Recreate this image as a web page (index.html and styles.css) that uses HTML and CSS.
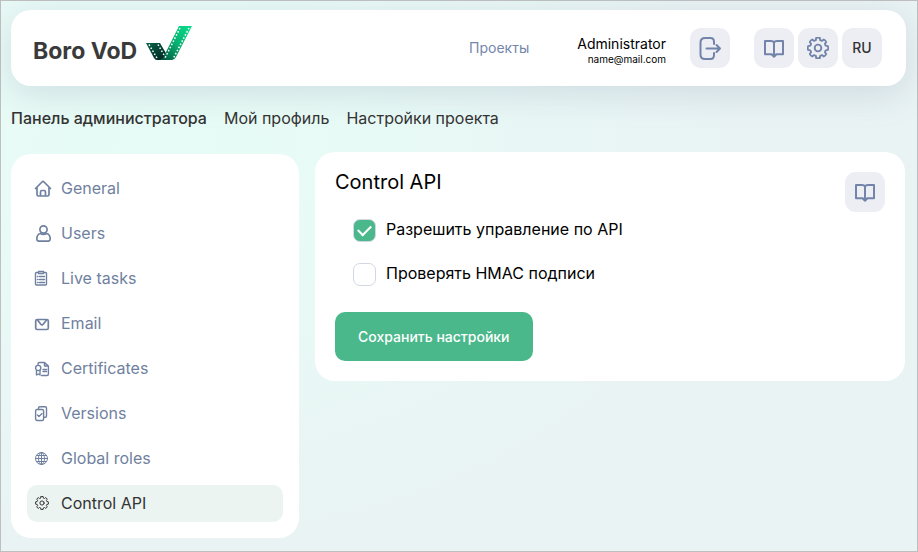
FILE: index.html
```html
<!DOCTYPE html>
<html lang="ru">
<head>
<meta charset="utf-8">
<meta name="viewport" content="width=device-width, initial-scale=1">
<title>Boro VoD</title>
<link rel="stylesheet" href="styles.css">
</head>
<body>
<svg class="sprite" aria-hidden="true">
  <symbol id="gear" viewBox="0 0 24 24">
    <path d="M10 2Q12 1.200 14 2L14.300 4.500 16.300 5.300 18.300 3.800Q20.200 4.600 20.900 6.500L19.500 8.500 20.300 10.500 22.700 10.900Q23.500 13 22.700 15.100L20.300 15.500 19.500 17.500 20.900 19.500Q20.200 21.400 18.300 22.200L16.300 20.700 14.300 21.500 14 24H10L9.700 21.500 7.700 20.700 5.700 22.200Q3.800 21.400 3.100 19.500L4.500 17.500 3.700 15.500 1.300 15.100Q.5 13 1.300 10.900L3.700 10.500 4.500 8.500 3.100 6.500Q3.800 4.600 5.700 3.800L7.700 5.300 9.700 4.500Z" transform="translate(0 -1)"/>
    <circle cx="12" cy="12" r="3.600"/>
  </symbol>
  <symbol id="book" viewBox="0 0 24 24">
    <path d="M12 6.500Q11.300 5 9 5H3V18.200H9.500L12 20.500L14.500 18.200H21V5H15Q12.700 5 12 6.500V20"/>
    <path fill="currentColor" d="M10.500 18.800H13.500L12 20.500Z"/>
  </symbol>
</svg>

<div class="page">
  <header class="header">
    <a class="logo" href="#">
      <span>Boro VoD</span>
      <svg class="logo-mark" viewBox="0 0 48 36" aria-hidden="true">
        <defs>
          <linearGradient id="long" x1="1" y1="0" x2="0" y2="1"><stop offset="0" stop-color="#08df8b"/><stop offset=".5" stop-color="#08b070"/><stop offset="1" stop-color="#034c3c"/></linearGradient>
          <linearGradient id="short" x1="0" y1="0" x2="1" y2="1"><stop offset="0" stop-color="#066449"/><stop offset="1" stop-color="#01211f"/></linearGradient>
        </defs>
        <path fill="url(#short)" d="M1 18H15L22 30 18 35H12Q10 35 9 33Z"/>
        <path fill="url(#long)" d="M34 1H47L31 32Q29.500 35 27 35H14Q18 34 19 31Z"/>
        <path class="film" d="M35 3L20 33M44 3L28.500 33"/>
        <path class="film" d="M4 19.500L12 33M13 19.500L19 30"/>
      </svg>
    </a>
    <nav class="main-nav"><a href="#">Проекты</a></nav>
    <div class="user">
      <span class="user-name">Administrator</span>
      <span class="user-mail">name@mail.com</span>
    </div>
    <button class="tile" type="button" aria-label="Выйти">
      <svg class="icon-large" viewBox="0 0 24 24" aria-hidden="true"><path d="M16 8V6Q16 2 12.500 2H7Q2.500 2 2.500 6.500V18.500Q2.500 23 7 23H12.500Q16 23 16 19V17M8.500 12.500H22M18.500 9L22 12.500 18.500 16"/></svg>
    </button>
    <div class="tools">
      <button class="tile" type="button" aria-label="Документация"><svg class="icon-large" aria-hidden="true"><use href="#book"/></svg></button>
      <button class="tile" type="button" aria-label="Настройки"><svg class="icon-large" viewBox="-1 -1 26 26" aria-hidden="true"><use href="#gear" width="24" height="24"/></svg></button>
      <button class="tile" type="button">RU</button>
    </div>
  </header>

  <nav class="tabs">
    <a class="current" href="#">Панель администратора</a>
    <a href="#">Мой профиль</a>
    <a href="#">Настройки проекта</a>
  </nav>

  <div class="columns">
    <nav class="sidebar">
      <a href="#"><svg class="icon" viewBox="0 0 18 18" aria-hidden="true"><path d="M1.500 9.500L8 3Q9 2 10 3L16.500 9.500M3 8.500V15.500Q3 17 4.500 17H13.500Q15 17 15 15.500V8.500M6.500 16.500V13Q6.500 11.500 8 11.500H10Q11.500 11.500 11.500 13V16.500"/></svg>General</a>
      <a href="#"><svg class="icon" viewBox="0 0 18 18" aria-hidden="true"><circle cx="9.500" cy="5.500" r="3.600"/><path d="M6.300 9.500Q2.800 10.500 2.800 15Q2.800 17.200 5 17.200H14Q16.200 17.200 16.200 15Q16.200 10.500 12.700 9.500Q9.500 11.500 6.300 9.500"/></svg>Users</a>
      <a href="#"><svg class="icon thin" viewBox="0 0 18 18" aria-hidden="true"><path d="M4.500 3.500H2.500Q1.500 3.500 1.500 4.500V15Q1.500 16 2.500 16H11.500Q12.500 16 12.500 15V4.500Q12.500 3.500 11.500 3.500H9.500M4.500 2.500H9.500V4.500H4.500ZM5.500 7.500H10.500M5.500 10.500H10.500M5.500 13.500H10.500M3.500 7.500H4M3.500 10.500H4M3.500 13.500H4"/></svg>Live tasks</a>
      <a href="#"><svg class="icon" viewBox="0 0 18 18" aria-hidden="true"><rect x="1.700" y="5.500" width="12.600" height="10" rx="1.500"/><path d="M3.500 6L7 10.500Q8 11.500 9 10.500L12.500 6"/></svg>Email</a>
      <a href="#"><svg class="icon thin" viewBox="0 0 18 18" aria-hidden="true"><path d="M4 5.500V5Q4 3.500 5.300 3.500H10.500L14.400 7V15Q14.400 16.500 13 16.500H7.500M10.500 3.500V7H14.400M9 10.500H12.500M9 12.500H12.500M2.500 11.500V16L4.300 15 6 16V11.500"/><circle cx="4.200" cy="9" r="2.600"/></svg>Certificates</a>
      <a href="#"><svg class="icon thin" viewBox="0 0 18 18" aria-hidden="true"><rect x="1.600" y="5.500" width="8" height="11" rx="1.500"/><path d="M4.500 5V4Q4.500 2.800 5.700 2.800H11.300Q12.500 2.800 12.500 4V12Q12.500 13.200 11.300 13.200H10M3.500 11L5 12.500 8 9.500"/></svg>Versions</a>
      <a href="#"><svg class="icon fine" viewBox="0 0 18 18" aria-hidden="true"><circle cx="7.500" cy="9.500" r="6"/><ellipse cx="7.500" cy="9.500" rx="3" ry="6"/><path d="M7.500 3.500V15.500M1.500 9.500H13.500M2.500 6.500H12.500M2.500 12.500H12.500"/></svg>Global roles</a>
      <a class="active" href="#"><svg class="icon" viewBox="0 0 18 18" aria-hidden="true"><use href="#gear" x="1" y="2" width="14" height="14"/></svg>Control API</a>
    </nav>

    <main class="card">
      <div class="card-head">
        <h1>Control API</h1>
        <button class="tile" type="button" aria-label="Документация"><svg class="icon-large" aria-hidden="true"><use href="#book"/></svg></button>
      </div>
      <form>
        <div class="options">
          <label><input type="checkbox" checked>Разрешить управление по API</label>
          <label><input type="checkbox">Проверять HMAC подписи</label>
        </div>
        <button class="save" type="button">Сохранить настройки</button>
      </form>
    </main>
  </div>
</div>
</body>
</html>
```
FILE: styles.css
```css
* {
  box-sizing: border-box;
}

body {
  margin: 0;
  font-family: Inter, "Liberation Sans", sans-serif;
  font-size: 16px;
  line-height: 20px;
  color: #000;
}

a {
  color: inherit;
  text-decoration: none;
}

button {
  border: 0;
  font: inherit;
  cursor: pointer;
}

svg {
  fill: none;
  stroke: currentColor;
  stroke-linecap: round;
  stroke-linejoin: round;
}

.sprite {
  position: absolute;
  width: 0;
  height: 0;
}

.page {
  min-height: 100vh;
  padding: 9px 12px 13px 10px;
  border: 1px solid #bfbfbf;
  background: radial-gradient(ellipse 62% 72% at 18% 26%, #e7fcf6 0%, #e8faf6 40%, #e9f3f4 100%);
}

.header {
  display: flex;
  align-items: center;
  height: 76px;
  margin-right: -1px;
  padding: 0 24px 0 22px;
  border-radius: 20px;
  background: #fff;
  box-shadow: 0 8px 34px rgba(120, 130, 160, 0.22);
}

.logo {
  display: flex;
  align-items: center;
  gap: 8px;
  color: #3a3a3a;
  font-size: 23px;
  font-weight: 700;
}

.logo span {
  padding-top: 6px;
}

.logo-mark {
  width: 48px;
  height: 36px;
  margin-bottom: 10px;
  stroke: none;
}

.logo-mark .film {
  stroke: #fff;
  stroke-width: 1.5;
  stroke-dasharray: 1.6 1.9;
  stroke-linecap: butt;
}

.main-nav {
  margin-left: auto;
  margin-right: 48px;
  color: #7586ab;
  font-size: 14px;
}

.user {
  display: flex;
  flex-direction: column;
  align-items: flex-end;
  margin-right: 24px;
  padding-top: 6px;
  font-size: 14px;
  line-height: 16px;
}

.user-mail {
  font-size: 10px;
  line-height: 14px;
}

.tile {
  display: grid;
  place-items: center;
  flex: none;
  width: 40px;
  height: 40px;
  padding: 0;
  border-radius: 11px;
  background: #edeef3;
  color: #333;
  font-size: 14px;
  font-weight: 500;
}

.icon-large {
  width: 24px;
  height: 24px;
  color: #7284a9;
  stroke-width: 2;
}

.tools {
  display: flex;
  gap: 4px;
  margin-left: 24px;
}

.tabs {
  display: flex;
  gap: 17px;
  padding: 22px 0 24px;
  color: #333;
}

.tabs .current {
  font-weight: 500;
}

.columns {
  display: flex;
  align-items: flex-start;
  gap: 16px;
}

.sidebar {
  display: flex;
  flex-direction: column;
  flex: none;
  gap: 8px;
  width: 288px;
  margin-top: 2px;
  padding: 16px;
  border-radius: 20px;
  background: #fff;
  color: #7081a0;
}

.sidebar a {
  display: flex;
  align-items: center;
  gap: 9px;
  height: 37px;
  padding: 0 7px 2px;
  border-radius: 10px;
}

.sidebar .active {
  background: #ebf4f1;
  color: #333;
}

.icon {
  width: 18px;
  height: 18px;
  stroke-width: 1.7;
}

.thin {
  stroke-width: 1.4;
}

.fine {
  stroke-width: 1;
}

.card {
  flex: 1;
  padding: 20px;
  border-radius: 20px;
  background: #fff;
}

.card-head {
  display: flex;
  align-items: flex-start;
  justify-content: space-between;
}

h1 {
  margin: 0;
  font-size: 20px;
  font-weight: 400;
}

.options {
  display: flex;
  flex-direction: column;
  gap: 20px;
  padding: 7px 18px 25px;
}

.options label {
  display: flex;
  align-items: flex-start;
  gap: 10px;
  height: 24px;
}

.options input {
  display: grid;
  place-items: center;
  appearance: none;
  width: 23px;
  height: 23px;
  margin: 0;
  border: 1px solid #d3d7e4;
  border-radius: 7px;
}

.options input:checked {
  background: #4ab88b;
}

.options input:checked::before {
  content: "";
  width: 11px;
  height: 6px;
  margin-bottom: 3px;
  border: solid #fff;
  border-width: 0 0 2px 2px;
  transform: rotate(-45deg);
}

.save {
  height: 49px;
  padding: 0 23px;
  border-radius: 10px;
  background: #4ab88b;
  color: #fff;
  font-size: 14px;
  font-weight: 500;
}
```
